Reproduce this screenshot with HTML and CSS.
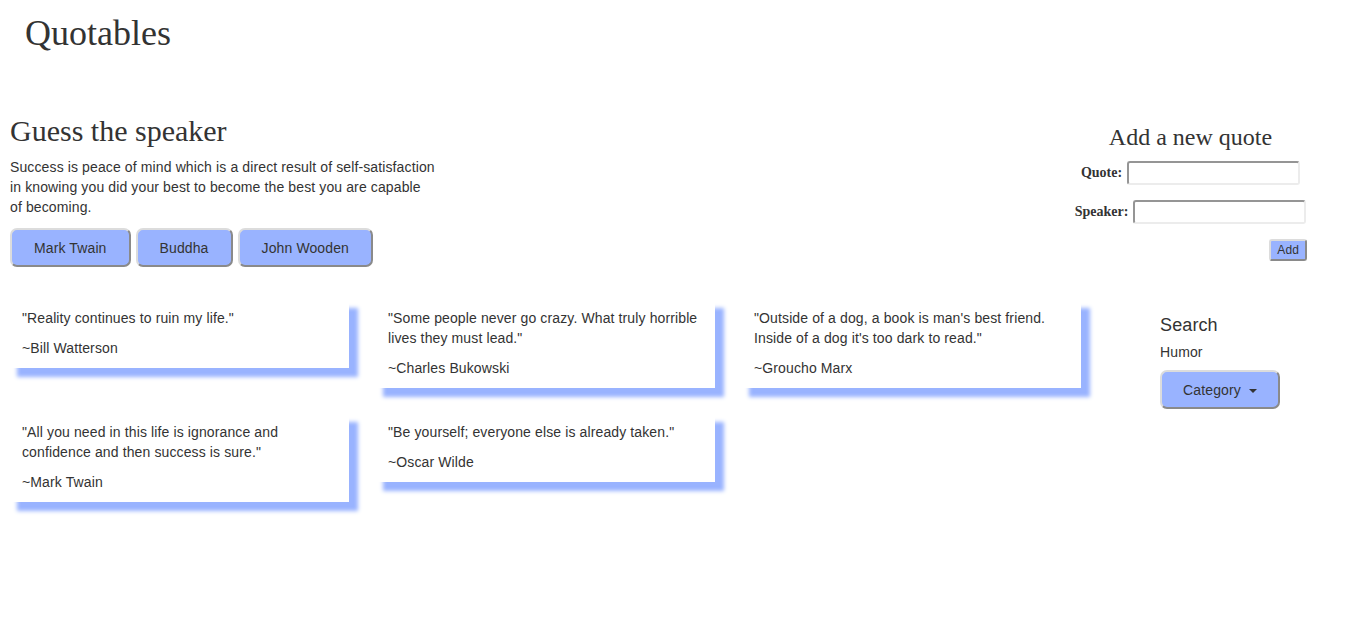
FILE: index.html
```html
<!DOCTYPE html>
<html lang="en">
<head>
<meta charset="utf-8">
<title>Quotables</title>
<link rel="stylesheet" href="styles.css">
</head>
<body>
<header class="site-header">
  <h1 class="brand">Quotables</h1>
</header>

<section class="top">
  <div class="guess">
    <h2 class="guess-title">Guess the speaker</h2>
    <p class="guess-quote">Success is peace of mind which is a direct result of self-satisfaction in knowing you did your best to become the best you are capable of becoming.</p>
    <div class="choices">
      <button class="btn btn-choice">Mark Twain</button>
      <button class="btn btn-choice">Buddha</button>
      <button class="btn btn-choice">John Wooden</button>
    </div>
  </div>

  <form class="add-form">
    <h3 class="add-title">Add a new quote</h3>
    <div class="form-row">
      <label class="form-label">Quote:</label>
      <input class="form-input" type="text">
    </div>
    <div class="form-row">
      <label class="form-label">Speaker:</label>
      <input class="form-input" type="text">
    </div>
    <div class="add-row">
      <button class="btn btn-add" type="button">Add</button>
    </div>
  </form>
</section>

<section class="main">
  <div class="quotes-grid">
    <div class="card">
      <p class="card-quote">"Reality continues to ruin my life."</p>
      <p class="card-author">~Bill Watterson</p>
    </div>
    <div class="card">
      <p class="card-quote">"Some people never go crazy. What truly horrible lives they must lead."</p>
      <p class="card-author">~Charles Bukowski</p>
    </div>
    <div class="card">
      <p class="card-quote">"Outside of a dog, a book is man's best friend. Inside of a dog it's too dark to read."</p>
      <p class="card-author">~Groucho Marx</p>
    </div>
    <div class="card">
      <p class="card-quote">"All you need in this life is ignorance and confidence and then success is sure."</p>
      <p class="card-author">~Mark Twain</p>
    </div>
    <div class="card">
      <p class="card-quote">"Be yourself; everyone else is already taken."</p>
      <p class="card-author">~Oscar Wilde</p>
    </div>
  </div>

  <aside class="search">
    <div class="search-title">Search</div>
    <div class="search-sub">Humor</div>
    <button class="btn btn-category">Category <span class="caret"></span></button>
  </aside>
</section>
</body>
</html>
```

FILE: styles.css
```css
html, body {
  margin: 0;
  padding: 0;
  background: #fff;
}

body {
  font-family: "Liberation Sans", Arial, Helvetica, sans-serif;
  font-size: 14px;
  line-height: 20px;
  letter-spacing: 0.12px;
  color: #333;
  min-height: 643px;
}

.site-header {
  padding: 13px 0 0 25px;
}

.brand {
  margin: 0;
  font-family: "Liberation Serif", "Times New Roman", serif;
  font-weight: normal;
  font-size: 36px;
  line-height: 40px;
  letter-spacing: 0;
  color: #333;
}

.top {
  display: flex;
  justify-content: space-between;
  align-items: flex-start;
  padding-top: 61px;
}

.guess {
  width: 426px;
  padding-left: 10px;
}

.guess-title {
  margin: 0;
  font-family: "Liberation Serif", "Times New Roman", serif;
  font-weight: normal;
  font-size: 30px;
  line-height: 33px;
  letter-spacing: 0;
  color: #333;
}

.guess-quote {
  margin: 10px 0 0;
}

.choices {
  display: flex;
  gap: 5px;
  margin-top: 11px;
}

.btn {
  font-family: "Liberation Sans", Arial, Helvetica, sans-serif;
  letter-spacing: 0.12px;
  color: #333;
  background: #99b3ff;
  border-style: solid;
  border-width: 2px;
  border-color: #dcdcdc #8a8a8a #8a8a8a #dcdcdc;
  cursor: pointer;
}

.btn-choice {
  height: 39px;
  padding: 0 22px;
  font-size: 14px;
  border-radius: 7px;
}

.add-form {
  width: 325px;
  margin: 10px 0 0;
  text-align: center;
}

.add-title {
  margin: 0 0 11px;
  font-family: "Liberation Serif", "Times New Roman", serif;
  font-weight: normal;
  font-size: 24px;
  line-height: 26px;
  letter-spacing: 0;
  color: #333;
}

.form-row {
  display: flex;
  justify-content: center;
  align-items: center;
  gap: 5px;
  height: 24px;
  margin-bottom: 15px;
}

.form-label {
  font-family: "Liberation Serif", "Times New Roman", serif;
  font-weight: bold;
  font-size: 14px;
  letter-spacing: 0;
  color: #333;
}

.form-input {
  box-sizing: border-box;
  width: 173px;
  height: 24px;
  margin: 0;
  padding: 1px 3px;
  border-style: solid;
  border-width: 2px;
  border-color: #959595 #ececec #ececec #959595;
  border-radius: 3px;
  background: #fff;
}

.add-row {
  display: flex;
  justify-content: flex-end;
  padding-right: 46px;
}

.btn-add {
  height: 22px;
  padding: 0 6px;
  font-size: 12px;
  line-height: 16px;
  border-radius: 3px;
}

.main {
  display: flex;
  align-items: flex-start;
  margin-top: 32px;
  padding-left: 8px;
  padding-bottom: 20px;
}

.quotes-grid {
  display: grid;
  grid-template-columns: repeat(3, 341px);
  column-gap: 25px;
  row-gap: 25px;
  align-items: start;
  padding-bottom: 14px;
}

.card {
  position: relative;
  background: #fff;
  padding: 9px 14px 10px;
  box-shadow: 9px 9px 4px #99b3ff;
}

.card-quote {
  margin: 0;
}

.card-author {
  margin: 10px 0 0;
}

.search {
  margin-left: 79px;
  padding-top: 16px;
}

.search-title {
  font-size: 18px;
  line-height: 20px;
}

.search-sub {
  margin-top: 7px;
}

.btn-category {
  display: block;
  width: 120px;
  height: 39px;
  margin-top: 8px;
  padding: 0;
  font-size: 14px;
  border-radius: 7px;
}

.caret {
  display: inline-block;
  width: 0;
  height: 0;
  margin-left: 4px;
  vertical-align: middle;
  border-top: 4px solid #333;
  border-left: 4px solid transparent;
  border-right: 4px solid transparent;
}
```
